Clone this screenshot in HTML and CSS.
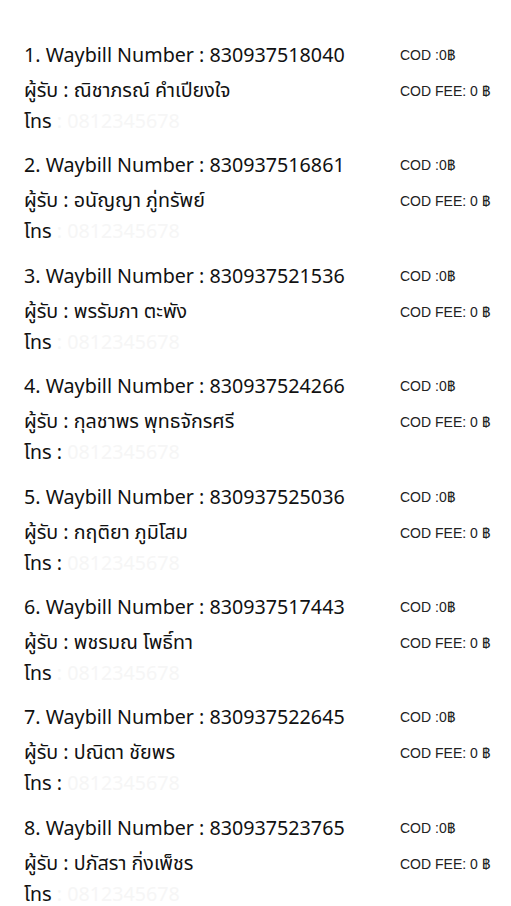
FILE: index.html
```html
<!DOCTYPE html>
<html lang="th">
<head>
  <meta charset="UTF-8">
  <meta name="viewport" content="width=device-width, initial-scale=1.0">
  <title>Waybill List</title>
  <link rel="stylesheet" href="styles.css">
</head>
<body>
  <!-- Waybill List -->
  <section class="waybill-list">
    <div class="waybill">
      <div class="title">1. Waybill Number : 830937518040</div>
      <div class="cod">COD :0฿</div>
      <div class="receiver">ผู้รับ : ณิชาภรณ์ คำเปียงใจ</div>
      <div class="cod">COD FEE: 0 ฿</div>
      <div class="phone">โทร <span class="faint">: 0812345678</span></div>
    </div>

    <div class="waybill">
      <div class="title">2. Waybill Number : 830937516861</div>
      <div class="cod">COD :0฿</div>
      <div class="receiver">ผู้รับ : อนัญญา ภู่ทรัพย์</div>
      <div class="cod">COD FEE: 0 ฿</div>
      <div class="phone">โทร <span class="faint">: 0812345678</span></div>
    </div>

    <div class="waybill">
      <div class="title">3. Waybill Number : 830937521536</div>
      <div class="cod">COD :0฿</div>
      <div class="receiver">ผู้รับ : พรรัมภา ตะพัง</div>
      <div class="cod">COD FEE: 0 ฿</div>
      <div class="phone">โทร <span class="faint">: 0812345678</span></div>
    </div>

    <div class="waybill">
      <div class="title">4. Waybill Number : 830937524266</div>
      <div class="cod">COD :0฿</div>
      <div class="receiver">ผู้รับ : กุลชาพร พุทธจักรศรี</div>
      <div class="cod">COD FEE: 0 ฿</div>
      <div class="phone">โทร : <span class="faint">0812345678</span></div>
    </div>

    <div class="waybill">
      <div class="title">5. Waybill Number : 830937525036</div>
      <div class="cod">COD :0฿</div>
      <div class="receiver">ผู้รับ : กฤติยา ภูมิโสม</div>
      <div class="cod">COD FEE: 0 ฿</div>
      <div class="phone">โทร : <span class="faint">0812345678</span></div>
    </div>

    <div class="waybill">
      <div class="title">6. Waybill Number : 830937517443</div>
      <div class="cod">COD :0฿</div>
      <div class="receiver">ผู้รับ : พชรมณ โพธิ์ทา</div>
      <div class="cod">COD FEE: 0 ฿</div>
      <div class="phone">โทร <span class="faint">: 0812345678</span></div>
    </div>

    <div class="waybill">
      <div class="title">7. Waybill Number : 830937522645</div>
      <div class="cod">COD :0฿</div>
      <div class="receiver">ผู้รับ : ปณิตา ชัยพร</div>
      <div class="cod">COD FEE: 0 ฿</div>
      <div class="phone">โทร : <span class="faint">0812345678</span></div>
    </div>

    <div class="waybill">
      <div class="title">8. Waybill Number : 830937523765</div>
      <div class="cod">COD :0฿</div>
      <div class="receiver">ผู้รับ : ปภัสรา กิ่งเพ็ชร</div>
      <div class="cod">COD FEE: 0 ฿</div>
      <div class="phone">โทร <span class="faint">: 0812345678</span></div>
    </div>
  </section>
</body>
</html>
```

FILE: styles.css
```css
/* Global Styles */
* {
  box-sizing: border-box;
  margin: 0;
  padding: 0;
}

body {
  font-family: "Noto Sans Thai", "Noto Sans", sans-serif;
  color: #111;
  background-color: #fff;
}

/* Waybill List */
.waybill-list {
  padding: 38px 0 0 24px;
}

.waybill {
  display: grid;
  grid-template-columns: 376px 1fr;
  margin-bottom: 12.4px;
}

.title {
  font-size: 19.7px;
  line-height: 36px;
}

.receiver {
  font-size: 19.7px;
  line-height: 34px;
}

.phone {
  grid-column: 1 / 3;
  font-size: 19.7px;
  line-height: 28px;
}

.phone .faint {
  color: #f6f6f6;
}

.cod {
  font-family: "Liberation Sans", sans-serif;
  font-size: 14px;
  color: #222;
}

.waybill .cod:nth-child(2) {
  line-height: 34px;
}

.waybill .cod:nth-child(4) {
  line-height: 34px;
}
```
